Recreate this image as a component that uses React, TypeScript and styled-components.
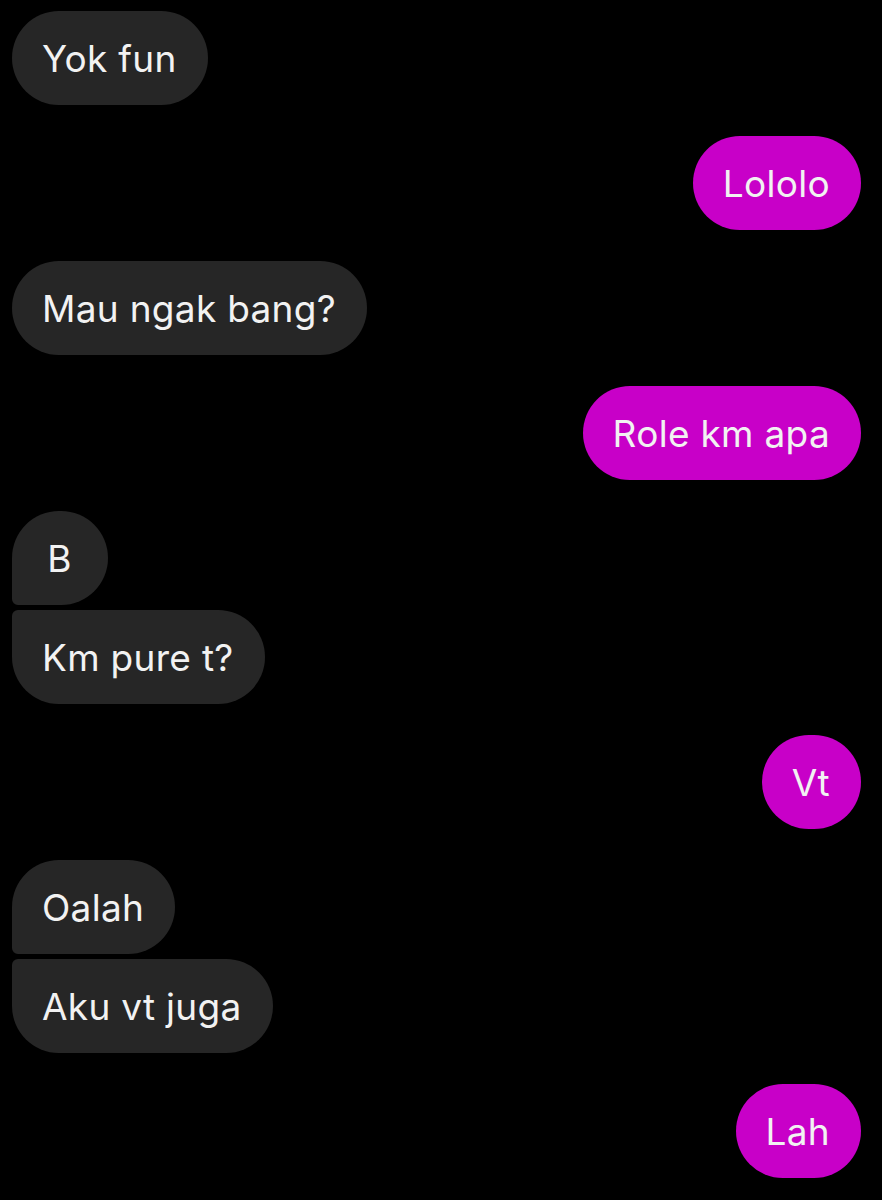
import styled, { createGlobalStyle } from "styled-components";

const GlobalStyle = createGlobalStyle`
  html, body {
    margin: 0;
    padding: 0;
    background: #000;
  }
`;

const Thread = styled.div`
  width: 882px;
  height: 1200px;
  box-sizing: border-box;
  padding: 11px 21px 0 12px;
  background: #000;
  display: flex;
  flex-direction: column;
  gap: 31px;
  overflow: hidden;
  font-family: Inter, "Noto Sans", sans-serif;
`;

const Group = styled.div<{ $mine?: boolean }>`
  display: flex;
  flex-direction: column;
  align-items: ${(p) => (p.$mine ? "flex-end" : "flex-start")};
  gap: 5px;
`;

const Bubble = styled.div<{ $mine?: boolean; $pos?: "single" | "first" | "last" }>`
  height: 94px;
  min-width: 96px;
  box-sizing: border-box;
  padding: 0 31px 0 30px;
  display: flex;
  align-items: center;
  justify-content: center;
  font-size: 37px;
  letter-spacing: 0.3px;
  color: #f2f2f2;
  white-space: nowrap;
  background: ${(p) => (p.$mine ? "#c800c8" : "#262626")};
  border-radius: 47px;
  ${(p) => p.$pos === "first" && "border-bottom-left-radius: 6px;"}
  ${(p) => p.$pos === "last" && "border-top-left-radius: 6px;"}
`;

type Msg = { mine: boolean; lines: string[] };

const messages: Msg[] = [
  { mine: false, lines: ["Yok fun"] },
  { mine: true, lines: ["Lololo"] },
  { mine: false, lines: ["Mau ngak bang?"] },
  { mine: true, lines: ["Role km apa"] },
  { mine: false, lines: ["B", "Km pure t?"] },
  { mine: true, lines: ["Vt"] },
  { mine: false, lines: ["Oalah", "Aku vt juga"] },
  { mine: true, lines: ["Lah"] },
];

const App = () => {
  return (
    <>
      <GlobalStyle />
      <Thread>
        {messages.map((m, i) => (
          <Group key={i} $mine={m.mine}>
            {m.lines.map((t, j) => (
              <Bubble
                key={j}
                $mine={m.mine}
                $pos={m.lines.length === 1 ? "single" : j === 0 ? "first" : "last"}
              >
                {t}
              </Bubble>
            ))}
          </Group>
        ))}
      </Thread>
    </>
  );
};

export default App;
